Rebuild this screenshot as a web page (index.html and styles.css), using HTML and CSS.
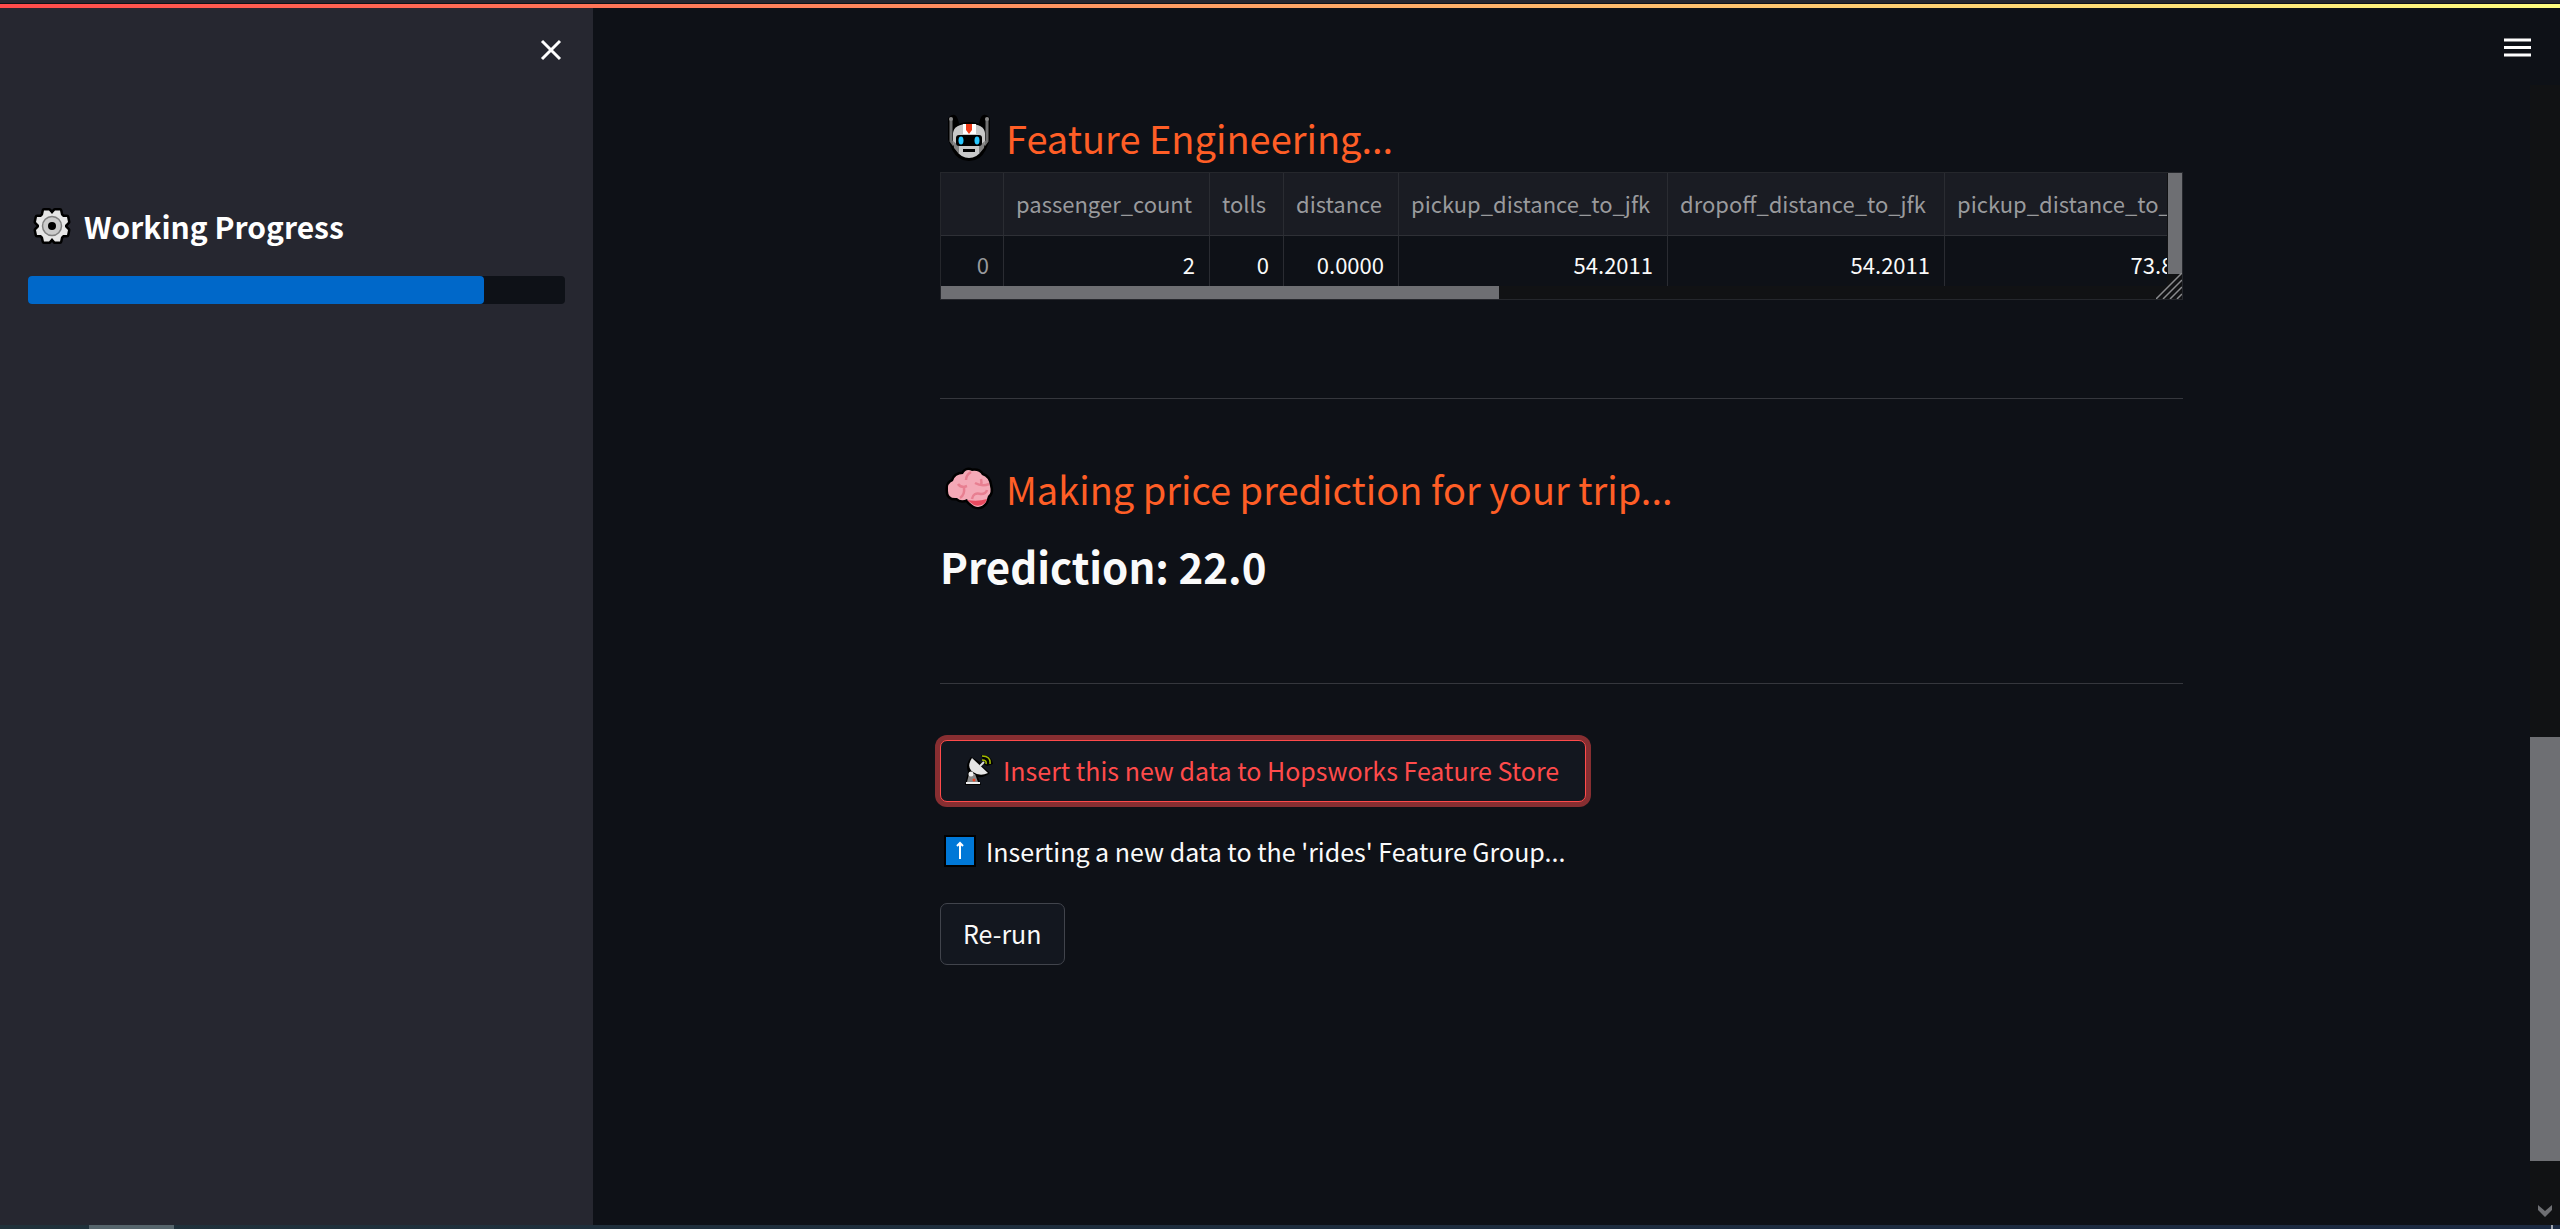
FILE: index.html
```html
<!DOCTYPE html>
<html lang="en">
<head>
<meta charset="utf-8">
<title>Taxi fare prediction</title>
<link rel="stylesheet" href="styles.css">
</head>
<body>
<div class="decoration"></div>
<div class="app">
  <aside class="sidebar">
    <button class="icon-button close" aria-label="Close sidebar">
      <svg width="22" height="22" viewBox="0 0 22 22"><path d="M2 2L20 20M20 2L2 20" stroke="#fff" stroke-width="3" fill="none"/></svg>
    </button>
    <h2 class="side-title">
      <svg class="gear" width="40" height="40" viewBox="-20 -20 40 40">
        <path d="M-8-15.500H-3L0-12 3-15.500H8L9-11 11-9 15-9 16-4 13-1V1L16 4 15 9H11L9 11 8 15.500H3L0 12-3 15.500H-8L-9 11-11 9H-15L-16 4-13 1V-1L-16-4-15-9H-11L-9-11Z" stroke="#000" stroke-width="5" stroke-linejoin="round" paint-order="stroke" fill="#e6e6e6"/>
        <circle r="9.500" fill="#cbcbcb" stroke="#808080" stroke-width="1.500"/><circle r="4" fill="#000"/>
      </svg>
      <span>Working Progress</span>
    </h2>
    <div class="progress" role="progressbar" aria-valuenow="85" aria-valuemin="0" aria-valuemax="100" aria-label="Working Progress"><div class="progress-fill" style="width:85%"></div></div>
  </aside>
  <main class="main">
    <button class="icon-button menu" aria-label="Main menu">
      <svg width="28" height="20" viewBox="0 0 28 20"><path d="M0 2H27M0 9.500H27M0 17H27" stroke="#fff" stroke-width="3"/></svg>
    </button>
    <div class="content">
      <h3 class="step">
        <svg width="50" height="50" viewBox="0 0 50 50">
          <path d="M6 6V26L10 36Q15 46 25 46T40 36L44 26V6Q40 1 38 7L36 14Q33 11 25 11T14 14L12 7Q10 1 6 6Z" fill="#000" stroke="#000" stroke-width="4" stroke-linejoin="round"/>
          <path d="M7 6V28L10 32M43 6V28L40 32" fill="none" stroke="#707070" stroke-width="3"/><circle cx="7" cy="6" r="2" fill="#888"/><circle cx="43" cy="6" r="2" fill="#888"/>
          <path d="M9 20Q10 11 25 11T41 20V30L37 38Q33 45 25 45T13 38L9 30Z" fill="#c8c8c8"/>
          <path d="M9 28L15 33V41L10 35ZM41 28L35 33V41L40 35Z" fill="#808080"/>
          <path d="M19 11H32V21H19Z" fill="#fff"/><path d="M22 11H28V17L25 21 22 17Z" fill="#f03a17"/>
          <rect x="12" y="22" width="26" height="11" rx="3" fill="#000"/><ellipse cx="17" cy="27.500" rx="2.500" ry="4" fill="#28c8ff"/><ellipse cx="33" cy="27.500" rx="2.500" ry="4" fill="#28c8ff"/>
          <rect x="19" y="36" width="12" height="3" fill="#000"/>
        </svg>
        <span>Feature Engineering...</span>
      </h3>
      <div class="frame">
        <div class="frame-view">
          <table class="data">
            <colgroup><col class="c-index"><col class="c-pass"><col class="c-tolls"><col class="c-dist"><col class="c-pickup"><col class="c-dropoff"><col class="c-last"></colgroup>
            <thead><tr><th></th><th>passenger_count</th><th>tolls</th><th>distance</th><th>pickup_distance_to_jfk</th><th>dropoff_distance_to_jfk</th><th>pickup_distance_to_ewr</th></tr></thead>
            <tbody><tr><th>0</th><td>2</td><td>0</td><td>0.0000</td><td>54.2011</td><td>54.2011</td><td>73.8612</td></tr></tbody>
          </table>
        </div>
        <div class="v-thumb"></div>
        <div class="h-thumb"></div>
        <svg class="grip" width="26" height="26" viewBox="0 0 26 26"><path d="M0 26L26 0M7 26L26 7M14 26L26 14M21 26L26 21" stroke="#8a8b8e" stroke-width="1.500"/></svg>
      </div>
      <hr class="rule rule-first">
      <h3 class="step">
        <svg width="50" height="50" viewBox="0 0 50 50">
          <path d="M9 17Q11 10 19 10Q22 4 28 7Q35 6 38 11Q45 13 46 22Q48 29 44 32L42 38Q37 45 30 42Q24 38 23 35Q17 38 13 34Q4 35 4 27Q3 19 9 17Z" fill="#f4a9b7" stroke="#000" stroke-width="5" stroke-linejoin="round" paint-order="stroke"/>
          <path d="M23 36Q34 38 43 35L41 39Q36 43 30 41Z" fill="#e84a5f"/>
          <path d="M14 20Q16 23 20 23Q21 31 16 34M20 23L23 22M27 8Q22 11 22 16M37 15Q38 19 37 21M31 19Q38 23 45 20M28 35Q29 28 37 30Q42 30 43 26" fill="none" stroke="#e87f91" stroke-width="2.500"/>
        </svg>
        <span>Making price prediction for your trip...</span>
      </h3>
      <h2 class="prediction">Prediction: 22.0</h2>
      <hr class="rule rule-second">
      <button class="btn btn-active">
        <svg width="30" height="32" viewBox="0 0 30 32">
          <path d="M8 3Q2 10 5 18L2 31H18L15 23Q21 24 27 19L19 12 21 7 18 1Q29 1 30 10L24 12Z" fill="#000"/>
          <path d="M9 4Q3 13 10 18T25 19Z" fill="#e5e5e5"/><path d="M6 20H12L15 28H4Z" fill="#888"/><circle cx="8" cy="20" r="2.500" fill="#eee"/><path d="M3 28H17V30H3Z" fill="#eee"/><circle cx="11" cy="26" r="1.500" fill="#f04020"/>
          <path d="M17 12L21 8" stroke="#ddd" stroke-width="2"/><path d="M19 6Q24 6 23 10M19 2Q28 2 27 10" fill="none" stroke="#a4bd00" stroke-width="1.500"/>
        </svg>
        <span>Insert this new data to Hopsworks Feature Store</span>
      </button>
      <p class="status">
        <svg width="32" height="32" viewBox="0 0 32 32"><path d="M0 0H32V32H0Z" fill="#000"/><path d="M2 2H30V30H2Z" fill="#0078d7"/><path d="M16 24V8M13 11L16 8 19 11" fill="none" stroke="#fff" stroke-width="2"/></svg>
        <span>Inserting a new data to the 'rides' Feature Group...</span>
      </p>
      <button class="btn">Re-run</button>
    </div>
    <div class="page-scroll">
      <div class="page-thumb"></div>
      <svg class="page-arrow" width="14" height="12" viewBox="0 0 14 12"><path d="M0 0L7 6 14 0V5L7 12 0 5Z" fill="#6e6f73"/></svg>
    </div>
  </main>
</div>
<div class="taskbar"><div class="task"></div><div class="task-mark"></div></div>
</body>
</html>
```
FILE: styles.css
```css
* { box-sizing: border-box; }
body {
  margin: 0;
  height: 100vh;
  display: flex;
  flex-direction: column;
  overflow: hidden;
  background: #0e1117;
  color: #fafafa;
  font: 25px/40px "Noto Sans CJK SC", "Noto Sans", sans-serif;
}
h2, h3, p { margin: 0; }
svg { display: block; flex: none; }
button { font: inherit; color: inherit; cursor: pointer; }

.decoration {
  flex: none;
  height: 8px;
  border-top: 3px solid #262730;
  background: linear-gradient(#0e1117 1px, transparent 1px), linear-gradient(90deg, #ff4b4b, #fffd80);
}
.app { flex: 1; min-height: 0; display: flex; }

.sidebar { width: 593px; flex: none; padding: 31px 28px; background: #262730; }
.icon-button { display: block; padding: 0; border: 0; background: none; }
.close { margin-left: auto; margin-right: 3px; }
.side-title {
  display: flex;
  align-items: center;
  gap: 12px;
  margin-top: 145px;
  padding-left: 4px;
  font-size: 30px;
  line-height: 40px;
  font-weight: 700;
  color: #fff;
}
.progress { height: 28px; margin-top: 30px; border-radius: 4px; background: #0e1117; }
.progress-fill { height: 100%; border-radius: 4px; background: #0068c9; }

.main { flex: 1; min-width: 0; position: relative; padding: 102px 30px 0 0; }
.menu { position: absolute; top: 30px; right: 28px; }
.content { width: 1243px; max-width: 100%; margin: 0 auto; }
.step {
  display: flex;
  align-items: center;
  gap: 12px;
  padding-left: 4px;
  font-size: 38px;
  line-height: 56px;
  font-weight: 400;
  color: #ff5e26;
}

.frame { position: relative; height: 128px; margin-top: 6px; border: 1px solid #25272c; background: #111214; overflow: hidden; }
.frame-view { height: 113px; margin-right: 15px; overflow: hidden; background: #0e1117; }
.data { width: 1284px; table-layout: fixed; border-collapse: separate; border-spacing: 0; font-size: 22px; line-height: 32px; }
.c-index { width: 63px; }
.c-pass { width: 206px; }
.c-tolls { width: 74px; }
.c-dist { width: 115px; }
.c-pickup { width: 269px; }
.c-dropoff { width: 277px; }
.c-last { width: 280px; }
.data th, .data td {
  padding: 12px 14px;
  border-right: 1px solid #2a2c32;
  text-align: right;
  font-weight: 400;
  white-space: nowrap;
}
.data tbody th, .data tbody td { height: 64px; vertical-align: top; }
.data th { color: #999a9d; }
.data thead th { height: 63px; padding: 0 12px 2px; border-bottom: 1px solid #2e3036; background: #1a1c23; text-align: left; }
.v-thumb { position: absolute; top: 0; right: 0; width: 14px; height: 101px; background: #6e6f73; }
.h-thumb { position: absolute; left: 0; bottom: 0; width: 45%; height: 13px; background: #6e6f73; }
.grip { position: absolute; right: 0; bottom: 0; }

.rule { height: 1px; border: 0; background: #35373d; }
.rule-first { margin: 98px 0 62px; }
.prediction { margin-top: 19px; font-size: 42px; line-height: 60px; font-weight: 700; }
.rule-second { margin: 87px 0 56px; }
.btn {
  display: flex;
  align-items: center;
  height: 62px;
  padding: 0 22px 2px;
  border: 1px solid #41444c;
  border-radius: 7px;
  background: #13171f;
}
.btn-active { gap: 10px; padding-right: 26px; border-color: #ff4b4b; color: #ff4b4b; box-shadow: 0 0 0 5px rgba(255, 75, 75, 0.5); }
.status { display: flex; align-items: center; gap: 10px; margin: 29px 0 32px; padding-left: 4px; }

.page-scroll { position: absolute; top: 77px; right: 0; bottom: 0; width: 30px; background: #111214; }
.page-thumb { position: absolute; top: 57.2%; right: 0; width: 30px; height: 37.2%; background: #6e6f73; }
.page-arrow { position: absolute; right: 8px; bottom: 8px; }

.taskbar { flex: none; height: 4px; display: flex; justify-content: space-between; background: linear-gradient(90deg, #20313a, #1c2a42); }
.task { width: 85px; margin-left: 89px; background: #56656c; }
.task-mark { width: 2px; margin-right: 7px; background: #a0a5ad; }
```
